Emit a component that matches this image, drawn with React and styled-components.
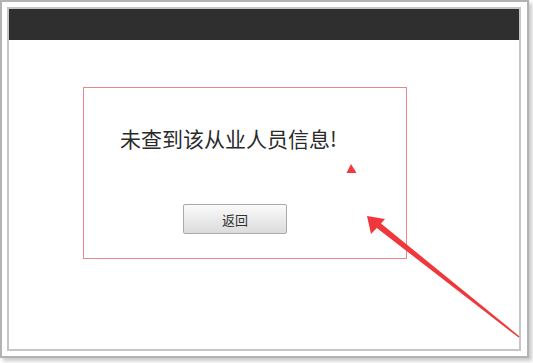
import React from "react";
import styled, { createGlobalStyle } from "styled-components";

const Global = createGlobalStyle`
  html, body { margin: 0; padding: 0; background: #ffffff; }
  body { font-family: "Noto Sans CJK SC", "Noto Sans", sans-serif; }
`;

const Stage = styled.div`
  position: relative;
  width: 533px;
  height: 363px;
  overflow: hidden;
`;

const OuterFrame = styled.div`
  box-sizing: border-box;
  width: 529px;
  height: 358px;
  border: 2px solid #b3b3b3;
  padding: 5px;
  background: #ffffff;
  box-shadow: 3px 3px 4px rgba(0, 0, 0, 0.22);
`;

const InnerFrame = styled.div`
  box-sizing: border-box;
  width: 514px;
  height: 344px;
  border: 2px solid #c6c6c6;
  background: #ffffff;
  display: flex;
  flex-direction: column;
`;

const TopBar = styled.div`
  height: 31px;
  background: #2f2f2f;
  flex: none;
`;

const MessageBox = styled.div`
  box-sizing: border-box;
  width: 324px;
  height: 172px;
  margin: 47px 0 0 74px;
  border: 1px solid #e8878b;
  padding: 40px 0 0 36px;
  display: flex;
  flex-direction: column;
  align-items: flex-start;
`;

const Message = styled.div`
  font-size: 21px;
  line-height: 21px;
  color: #2a2a2a;
  white-space: nowrap;
`;

const BackButton = styled.button`
  box-sizing: border-box;
  width: 104px;
  height: 30px;
  margin: 55px 0 0 63px;
  border: 1px solid #a9a9a9;
  border-radius: 2px;
  background: linear-gradient(#fafafa, #e9e9e9 55%, #dcdcdc);
  font-family: "Noto Sans CJK SC", sans-serif;
  font-size: 13px;
  color: #333333;
  padding: 0;
`;

const Overlay = styled.svg`
  position: absolute;
  left: 0;
  top: 0;
  pointer-events: none;
`;

export default function App() {
  return (
    <>
      <Global />
      <Stage>
        <OuterFrame>
          <InnerFrame>
            <TopBar />
            <MessageBox>
              <Message>未查到该从业人员信息!</Message>
              <BackButton>返回</BackButton>
            </MessageBox>
          </InnerFrame>
        </OuterFrame>
        <Overlay width="533" height="363" viewBox="0 0 533 363">
          <polygon points="351,164 346.5,173 356.5,173" fill="#f03a3d" />
          <polygon
            points="367,216 385,219 381,223.5 519.6,336.4 518.6,337.6 376.8,228 371,234"
            fill="#f0383c"
          />
        </Overlay>
      </Stage>
    </>
  );
}
